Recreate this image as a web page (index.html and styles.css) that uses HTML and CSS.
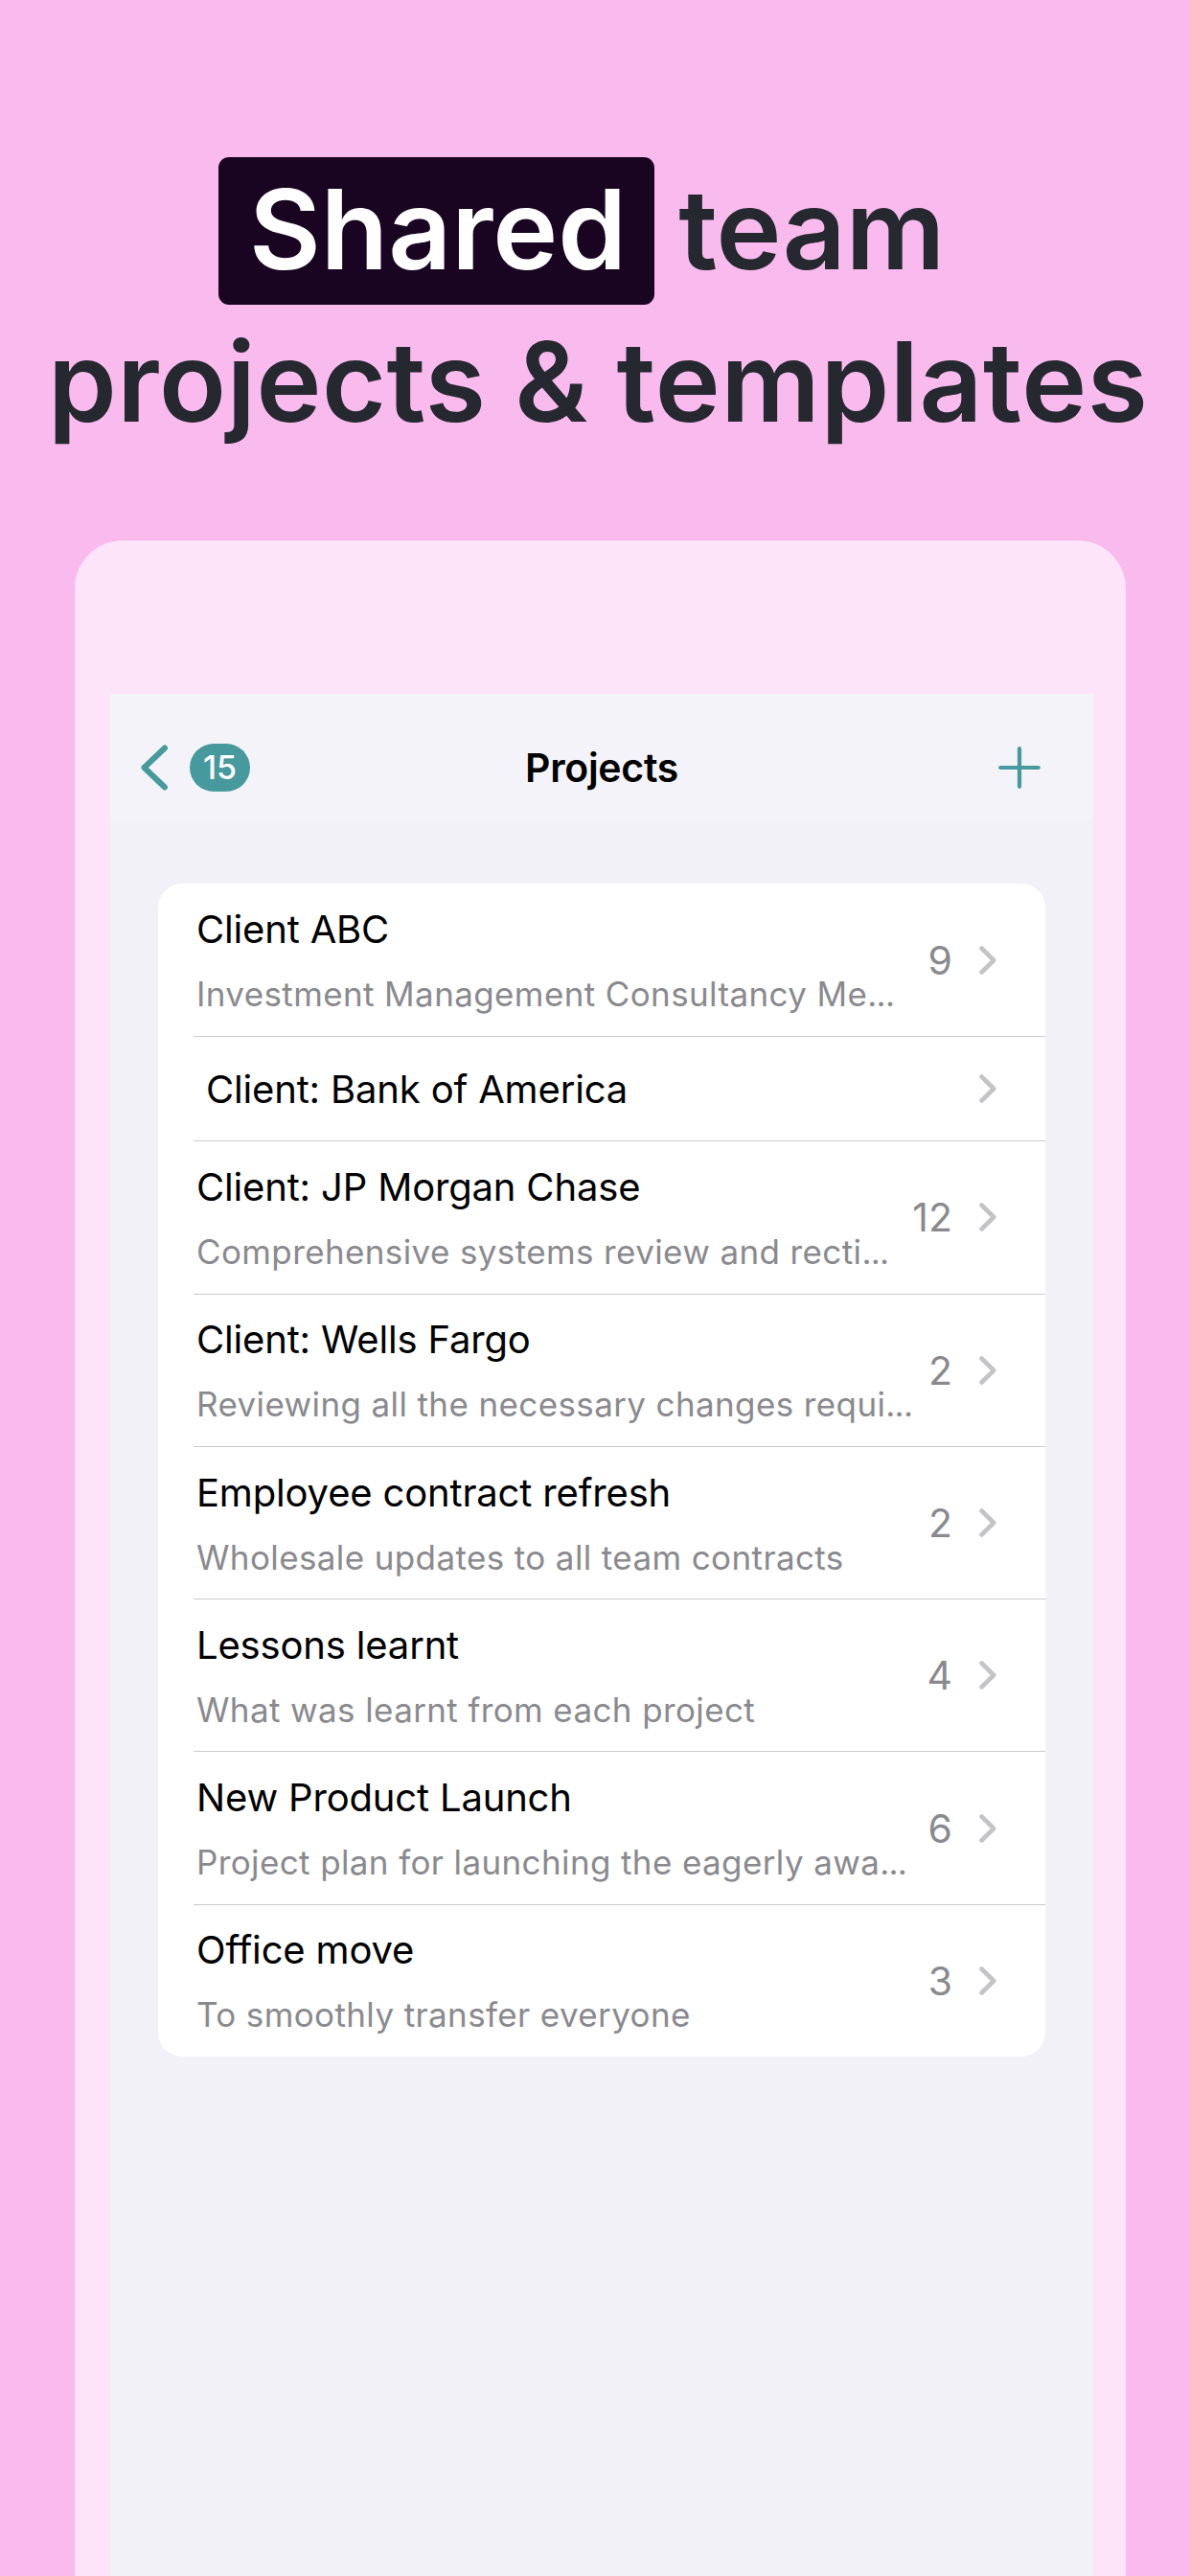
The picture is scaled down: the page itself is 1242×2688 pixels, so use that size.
FILE: index.html
```
<!DOCTYPE html>
<html lang="en">
	<head>
		<meta charset="utf-8">
		<title>Shared team projects &amp; templates</title>
		<link rel="stylesheet" href="styles.css">
	</head>
	<body>
		<h1 class="headline">
			<span class="line line-first"><span class="highlight">Shared</span><span class="team">team</span></span>
			<span class="line line-second">projects &amp; templates</span>
		</h1>

		<div class="phone">
			<div class="screen">
				<div class="navbar">
					<div class="nav-left">
						<svg class="back" viewBox="0 0 28 48"><path d="M25 3.5L3.5 24L25 44.5"/></svg>
						<span class="badge">15</span>
					</div>
					<div class="nav-title">Projects</div>
					<div class="nav-right">
						<svg class="plus" viewBox="0 0 44 44"><path d="M22 2.2V41.8M2.2 22H41.8"/></svg>
					</div>
				</div>

				<div class="list">
					<div class="row">
						<div class="text">
							<div class="title">Client ABC</div>
							<div class="sub">Investment Management Consultancy Me<span class="dots">...</span></div>
						</div>
						<span class="count">9</span>
						<svg class="arrow" viewBox="0 0 18 30"><path d="M2.5 2.5L15.2 15L2.5 27.5"/></svg>
					</div>
					<div class="row row-single">
						<div class="text">
							<div class="title">Client: Bank of America</div>
						</div>
						<svg class="arrow" viewBox="0 0 18 30"><path d="M2.5 2.5L15.2 15L2.5 27.5"/></svg>
					</div>
					<div class="row">
						<div class="text">
							<div class="title">Client: JP Morgan Chase</div>
							<div class="sub">Comprehensive systems review and recti<span class="dots">...</span></div>
						</div>
						<span class="count">12</span>
						<svg class="arrow" viewBox="0 0 18 30"><path d="M2.5 2.5L15.2 15L2.5 27.5"/></svg>
					</div>
					<div class="row">
						<div class="text">
							<div class="title">Client: Wells Fargo</div>
							<div class="sub">Reviewing all the necessary changes requi<span class="dots">...</span></div>
						</div>
						<span class="count">2</span>
						<svg class="arrow" viewBox="0 0 18 30"><path d="M2.5 2.5L15.2 15L2.5 27.5"/></svg>
					</div>
					<div class="row">
						<div class="text">
							<div class="title">Employee contract refresh</div>
							<div class="sub">Wholesale updates to all team contracts</div>
						</div>
						<span class="count">2</span>
						<svg class="arrow" viewBox="0 0 18 30"><path d="M2.5 2.5L15.2 15L2.5 27.5"/></svg>
					</div>
					<div class="row">
						<div class="text">
							<div class="title">Lessons learnt</div>
							<div class="sub">What was learnt from each project</div>
						</div>
						<span class="count">4</span>
						<svg class="arrow" viewBox="0 0 18 30"><path d="M2.5 2.5L15.2 15L2.5 27.5"/></svg>
					</div>
					<div class="row">
						<div class="text">
							<div class="title">New Product Launch</div>
							<div class="sub">Project plan for launching the eagerly awa<span class="dots">...</span></div>
						</div>
						<span class="count">6</span>
						<svg class="arrow" viewBox="0 0 18 30"><path d="M2.5 2.5L15.2 15L2.5 27.5"/></svg>
					</div>
					<div class="row">
						<div class="text">
							<div class="title">Office move</div>
							<div class="sub">To smoothly transfer everyone</div>
						</div>
						<span class="count">3</span>
						<svg class="arrow" viewBox="0 0 18 30"><path d="M2.5 2.5L15.2 15L2.5 27.5"/></svg>
					</div>
				</div>
			</div>
		</div>
	</body>
</html>
```

FILE: styles.css
```
* {
	box-sizing: border-box;
}

body {
	margin: 0;
	height: 2688px;
	display: flex;
	flex-direction: column;
	overflow: hidden;
	background-color: #f9baed;
	font-family: Inter, "Liberation Sans", sans-serif;
}

.headline {
	margin: 0;
	height: 564px;
	padding-top: 160px;
	font-size: 115px;
	font-weight: 600;
	line-height: 159px;
	color: #25282f;
	white-space: nowrap;
}

.line {
	display: block;
}

.line-first {
	padding-left: 228px;
}

.line-second {
	padding-left: 50px;
	letter-spacing: 0.6px;
}

.highlight {
	padding: 6px 29px 9px 32px;
	border-radius: 11px;
	background-color: #190522;
	color: #fff;
}

.team {
	margin-left: 25px;
}

.phone {
	flex: 1;
	display: flex;
	margin: 0 67px 0 78px;
	padding: 160px 34px 0 37px;
	border-radius: 50px 50px 0 0;
	background-color: #fde4f8;
}

.screen {
	flex: 1;
	background-color: #f2f1f7;
}

.navbar {
	display: grid;
	grid-template-columns: 1fr auto 1fr;
	align-items: center;
	height: 131px;
	padding: 22px 32px 0 32px;
	background-color: #f4f3f9;
}

.nav-left {
	display: flex;
	align-items: center;
	gap: 23px;
}

.nav-right {
	display: flex;
	justify-content: flex-end;
	padding-right: 23px;
}

.back {
	width: 28px;
	height: 48px;
	fill: none;
	stroke: #469a9d;
	stroke-width: 6;
	stroke-linecap: round;
	stroke-linejoin: round;
}

.badge {
	width: 63px;
	height: 50px;
	border-radius: 25px;
	background-color: #469a9d;
	color: #fff;
	font-size: 34px;
	font-weight: 500;
	line-height: 50px;
	text-align: center;
}

.nav-title {
	font-size: 41px;
	font-weight: 600;
	line-height: 50px;
	letter-spacing: -0.3px;
}

.plus {
	width: 44px;
	height: 44px;
	fill: none;
	stroke: #469a9d;
	stroke-width: 4.2;
	stroke-linecap: round;
}

.list {
	margin: 67px 50px 0;
	border-radius: 25px;
	background-color: #fff;
}

.row {
	display: flex;
	align-items: center;
	height: 159.3px;
	margin-left: 37px;
	padding-right: 51px;
}

.row + .row {
	border-top: 1px solid #cbcbcd;
}

.row-single {
	height: 109px;
}

.text {
	flex: 1;
	padding: 1px 0 0 3px;
	white-space: nowrap;
}

.row-single .text {
	padding-left: 13px;
}

.title {
	font-size: 40px;
	line-height: 50px;
	letter-spacing: -0.17px;
	color: #000;
}

.sub {
	margin-top: 20px;
	font-size: 35px;
	line-height: 44px;
	letter-spacing: 0.38px;
	color: #8a8a8e;
}

.dots {
	letter-spacing: -0.8px;
}

.count {
	font-size: 41px;
	line-height: 50px;
	color: #8a8a8e;
}

.arrow {
	width: 18px;
	height: 30px;
	margin-left: 28px;
	fill: none;
	stroke: #c4c4c7;
	stroke-width: 4.6;
	stroke-linecap: round;
	stroke-linejoin: round;
}
```
